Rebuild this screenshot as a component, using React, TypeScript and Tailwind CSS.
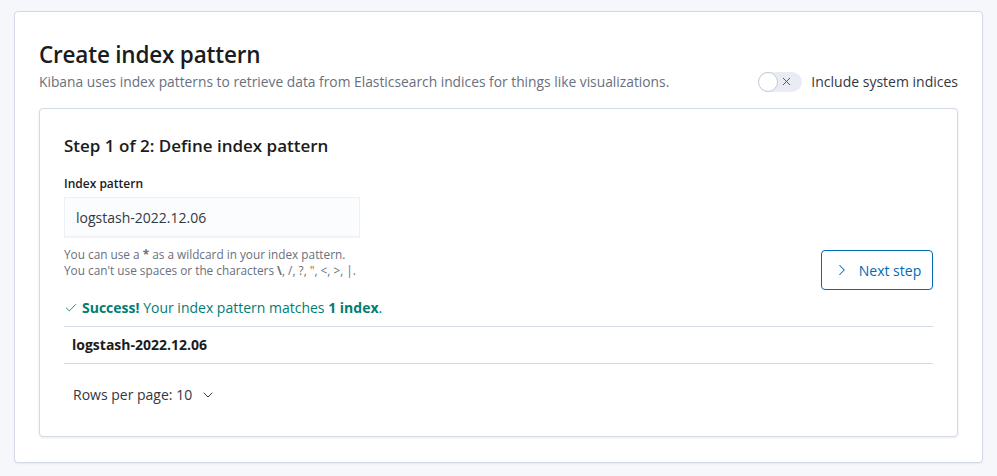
import { Check, ChevronDown, ChevronRight, X } from "lucide-react";

const font = { fontFamily: '"Open Sans", "Liberation Sans", sans-serif' };

function Toggle() {
  return (
    <div className="flex items-center gap-[9px]">
      <span className="relative flex h-[20px] w-[44px] items-center justify-end rounded-full bg-[#e9edf3] pr-[9px]">
        <span className="absolute left-0 top-0 h-[20px] w-[20px] rounded-full border border-[#c2cad8] bg-white" />
        <X size={13} strokeWidth={1.5} className="text-[#343741]" />
      </span>
      <span className="text-[14px] text-[#343741]">Include system indices</span>
    </div>
  );
}

export default function App() {
  return (
    <div style={font} className="min-h-[476px] w-[997px] bg-[#f5f7fa] px-[14px] pb-[13px] pt-[11px] text-[#343741]">
      <div className="rounded-[4px] border border-[#d3dae6] bg-white px-[24px] pb-[25px] pt-[29px] shadow-[0_1px_2px_rgba(0,0,0,0.06)]">
        <h1 className="text-[22.5px] font-semibold leading-[28px] tracking-[-0.2px] text-[#1a1c21]">
          Create index pattern
        </h1>
        <div className="mt-[2px] flex items-center justify-between">
          <p className="text-[13.8px] leading-[20px] text-[#69707d]">
            Kibana uses index patterns to retrieve data from Elasticsearch indices for things like visualizations.
          </p>
          <Toggle />
        </div>

        <div className="mt-[16px] rounded-[4px] border border-[#d3dae6] bg-white px-[24px] pb-[31px] pt-[25px] shadow-[0_1px_3px_rgba(0,0,0,0.08)]">
          <h2 className="text-[17px] font-semibold leading-[24px] text-[#1a1c21]">
            Step 1 of 2: Define index pattern
          </h2>

          <div className="mt-[17px] flex items-end justify-between">
            <div>
              <label className="block text-[12px] font-semibold leading-[18px] text-[#1a1c21]">
                Index pattern
              </label>
              <div className="mt-[4px] flex h-[40px] w-[296px] items-center border border-[#eef0f3] bg-[#fbfcfd] px-[11px] text-[14px] text-[#343741] shadow-[0_1px_1px_rgba(0,0,0,0.04)]">
                logstash-2022.12.06
              </div>
              <div className="mt-[9px] text-[11.8px] leading-[16px] text-[#69707d]">
                <p>
                  You can use a <b className="font-bold">*</b> as a wildcard in your index pattern.
                </p>
                <p>
                  You can't use spaces or the characters <b className="font-bold">\</b>, /, ?, ", &lt;, &gt;, |.
                </p>
              </div>
            </div>
            <button className="mb-[-12px] flex h-[40px] w-[112px] items-center justify-center gap-[8px] rounded-[4px] border border-[#006bb4] text-[14px] text-[#006bb4]">
              <ChevronRight size={18} strokeWidth={1.4} />
              Next step
            </button>
          </div>

          <div className="mt-[20px] flex items-center gap-[4px] pb-[8px] text-[14px] leading-[20px] text-[#017d73]">
            <Check size={14} strokeWidth={1.5} />
            <span>
              <b className="font-bold">Success!</b> Your index pattern matches <b className="font-bold">1 index</b>.
            </span>
          </div>

          <div className="border-y border-[#d3dae6] px-[8px] py-[8px] text-[14px] font-bold leading-[20px] text-[#1a1c21]">
            logstash-2022.12.06
          </div>

          <div className="mt-[20px] flex items-center gap-[8px] px-[9px] text-[14px] text-[#343741]">
            Rows per page: 10
            <ChevronDown size={16} strokeWidth={1.5} />
          </div>
        </div>
      </div>
    </div>
  );
}
